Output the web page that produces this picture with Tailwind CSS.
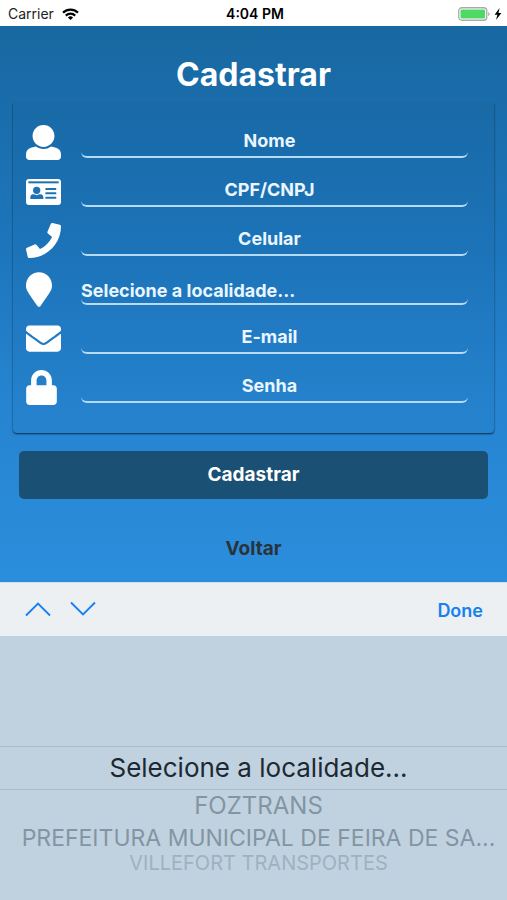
<!DOCTYPE html>
<html lang="pt-BR">
<head>
<meta charset="utf-8">
<meta name="viewport" content="width=device-width, initial-scale=1">
<title>Cadastrar</title>
<script src="https://cdn.jsdelivr.net/npm/@tailwindcss/browser@4"></script>
</head>
<body class="flex min-h-screen flex-col bg-[#c0d2e0] font-['Inter','Liberation_Sans',sans-serif]">

<header class="grid h-[26px] grid-cols-3 items-center bg-white pt-px pr-[5px] pl-2 text-[14px] text-[#222]">
  <div class="flex items-center gap-2">
    <span>Carrier</span>
    <svg class="h-3 w-[17px]" viewBox="0 0 17 12" fill="none" stroke="#000" stroke-width="2.2" aria-hidden="true">
      <path d="M1 4.6a10.8 10.8 0 0 1 15 0"/>
      <path d="M3.8 7.6a6.8 6.8 0 0 1 9.4 0"/>
      <path d="M8.5 12 5.9 9.4a3.8 3.8 0 0 1 5.2 0z" fill="#000" stroke="none"/>
    </svg>
  </div>
  <time class="text-center font-semibold text-black">4:04 PM</time>
  <div class="flex items-center justify-end gap-1">
    <svg class="h-[14px] w-8" viewBox="0 0 32 14" aria-hidden="true">
      <rect x=".75" y=".75" width="28" height="12.5" rx="3" fill="#fff" stroke="#aaa" stroke-width="1.3"/>
      <rect x="2.5" y="2.5" width="24.5" height="9" rx="1" fill="#4cd964"/>
      <path d="M30.2 5v4q1.5-.6 1.5-2t-1.5-2z" fill="#aaa"/>
    </svg>
    <svg class="h-3 w-2" viewBox="0 0 8 12" aria-hidden="true"><path d="M5.6 0 .6 6.8h2.8L2 12l5.4-7H4.5z" fill="#000"/></svg>
  </div>
</header>

<main class="flex h-[556px] flex-col bg-[linear-gradient(#1868a1,#1d76bc_40%,#2684d1_68%,#2b8edc)] px-[13px]">
  <h1 class="pt-[29px] pb-2 text-center text-[32px] leading-10 font-bold text-white">Cadastrar</h1>

  <form class="flex flex-col">
    <div class="flex h-[330px] flex-col gap-[14px] rounded-b bg-black/2 pt-[22px] pr-[26px] pl-[13px] shadow-[0_1px_2px_rgba(0,0,0,0.7)]">
      <div class="flex h-[35px] items-center gap-[19px]">
        <label for="nome" class="w-9 shrink-0">
          <svg class="size-[35px]" viewBox="0 0 512 512" fill="#fff" role="img" aria-label="Nome"><path d="M256 0c88.366 0 160 71.634 160 160s-71.634 160-160 160S96 248.366 96 160 167.634 0 256 0zm183.283 333.821l-71.313-17.828c-74.923 53.89-165.738 41.864-223.94 0l-71.313 17.828C29.981 344.505 0 382.903 0 426.955V464c0 26.51 21.49 48 48 48h416c26.51 0 48-21.49 48-48v-37.045c0-44.052-29.981-82.45-72.717-93.134z"/></svg>
        </label>
        <input id="nome" type="text" placeholder="Nome" class="h-[31px] min-w-0 flex-1 rounded-md border-b-2 border-[#b5dbf6] pr-[10px] pb-[3px] text-center text-[18px] font-bold text-white outline-none placeholder:text-[#eaf6ff]">
      </div>
      <div class="flex h-[35px] items-center gap-[19px]">
        <label for="cpf" class="w-9 shrink-0">
          <svg class="h-[26px] w-[35px]" viewBox="0 0 105 78" role="img" aria-label="CPF/CNPJ">
            <rect width="105" height="78" rx="9" fill="#fff"/>
            <g fill="#1c74b4"><rect x="7" y="7" width="91" height="6"/><circle cx="32" cy="34" r="11"/><path d="M13 60v-5q0-8 8-9h3q8 5 16 0h3q9 1 9 9v5z"/><rect x="58" y="27" width="33" height="6" rx="2"/><rect x="58" y="40" width="33" height="6" rx="2"/><rect x="58" y="53" width="33" height="6" rx="2"/></g>
          </svg>
        </label>
        <input id="cpf" type="text" placeholder="CPF/CNPJ" class="h-[31px] min-w-0 flex-1 rounded-md border-b-2 border-[#b5dbf6] pr-[10px] pb-[3px] text-center text-[18px] font-bold text-white outline-none placeholder:text-[#eaf6ff]">
      </div>
      <div class="flex h-[35px] items-center gap-[19px]">
        <label for="celular" class="w-9 shrink-0">
          <svg class="size-[35px]" viewBox="0 0 512 512" fill="#fff" role="img" aria-label="Celular"><path d="M493.4 24.6l-104-24c-11.3-2.6-22.9 3.3-27.5 13.9l-48 112c-4.2 9.8-1.4 21.3 6.9 28l60.6 49.6c-36 76.7-98.9 140.5-177.2 177.2l-49.6-60.6c-6.8-8.3-18.2-11.1-28-6.9l-112 48C3.9 366.5-2 378.1.6 389.4l24 104C27.1 504.2 36.7 512 48 512c256.1 0 464-207.5 464-464 0-11.2-7.7-20.9-18.6-23.4z"/></svg>
        </label>
        <input id="celular" type="tel" placeholder="Celular" class="h-[31px] min-w-0 flex-1 rounded-md border-b-2 border-[#b5dbf6] pr-[10px] pb-[3px] text-center text-[18px] font-bold text-white outline-none placeholder:text-[#eaf6ff]">
      </div>
      <div class="flex h-[35px] items-center gap-[19px]">
        <label for="local" class="w-9 shrink-0">
          <svg class="h-[35px] w-[26px]" viewBox="0 0 384 512" fill="#fff" role="img" aria-label="Localidade"><path d="M172.268 501.67C26.97 291.031 0 269.413 0 192 0 85.961 85.961 0 192 0s192 85.961 192 192c0 77.413-26.97 99.031-172.268 309.67-9.535 13.774-29.93 13.773-39.464 0z"/></svg>
        </label>
        <select id="local" class="h-[31px] min-w-0 flex-1 appearance-none rounded-md border-b-2 border-[#b5dbf6] pt-[3px] text-[18px] font-bold text-[#eaf6ff] outline-none">
          <option>Selecione a localidade...</option>
          <option>FOZTRANS</option>
          <option>PREFEITURA MUNICIPAL DE FEIRA DE SA...</option>
          <option>VILLEFORT TRANSPORTES</option>
        </select>
      </div>
      <div class="flex h-[35px] items-center gap-[19px]">
        <label for="email" class="w-9 shrink-0">
          <svg class="size-[35px]" viewBox="0 0 512 512" fill="#fff" role="img" aria-label="E-mail"><path d="M502.3 190.8c3.9-3.1 9.7-.2 9.7 4.7V400c0 26.5-21.5 48-48 48H48c-26.5 0-48-21.5-48-48V195.6c0-5 5.7-7.8 9.7-4.7 22.4 17.4 52.1 39.5 154.1 113.6 21.1 15.4 56.7 47.8 92.2 47.6 35.7.3 72-32.8 92.3-47.6 102-74.1 131.6-96.3 154-113.7zM256 320c23.2.4 56.6-29.2 73.4-41.4 132.7-96.3 142.8-104.7 173.4-128.7 5.8-4.5 9.2-11.5 9.2-18.9v-19c0-26.5-21.5-48-48-48H48c-26.5 0-48 21.5-48 48v19c0 7.4 3.4 14.3 9.2 18.9 30.6 23.9 40.7 32.4 173.4 128.7 16.8 12.2 50.2 41.8 73.4 41.4z"/></svg>
        </label>
        <input id="email" type="email" placeholder="E-mail" class="h-[31px] min-w-0 flex-1 rounded-md border-b-2 border-[#b5dbf6] pr-[10px] pb-[3px] text-center text-[18px] font-bold text-white outline-none placeholder:text-[#eaf6ff]">
      </div>
      <div class="flex h-[35px] items-center gap-[19px]">
        <label for="senha" class="w-9 shrink-0">
          <svg class="h-[35px] w-[31px]" viewBox="0 0 448 512" fill="#fff" role="img" aria-label="Senha"><path d="M400 224h-24v-72C376 68.2 307.8 0 224 0S72 68.2 72 152v72H48c-26.5 0-48 21.5-48 48v192c0 26.5 21.5 48 48 48h352c26.5 0 48-21.5 48-48V272c0-26.5-21.5-48-48-48zm-104 0H152v-72c0-39.7 32.3-72 72-72s72 32.3 72 72v72z"/></svg>
        </label>
        <input id="senha" type="password" placeholder="Senha" class="h-[31px] min-w-0 flex-1 rounded-md border-b-2 border-[#b5dbf6] pr-[10px] pb-[3px] text-center text-[18px] font-bold text-white outline-none placeholder:text-[#eaf6ff]">
      </div>
    </div>
    <button type="submit" class="mx-[6px] mt-[18px] h-12 rounded-[5px] bg-[#1a5073] pt-px text-[19px] font-bold text-white">Cadastrar</button>
  </form>
  <a href="#" class="mt-9 self-center text-[19px] leading-7 font-bold text-[#2a333b]">Voltar</a>
</main>

<section aria-label="Localidade" class="flex flex-1 flex-col">
  <div class="flex h-[54px] items-center justify-between border-t border-[#cfdfea] bg-[#ecf0f3] px-6 text-[#1680ef]">
    <div class="flex gap-[17px] pb-px">
      <button type="button" aria-label="Anterior"><svg class="h-4 w-7" viewBox="0 0 28 16" fill="none" stroke="currentColor" stroke-width="1.9"><path d="M2 14.5 14 2.5l12 12"/></svg></button>
      <button type="button" aria-label="Próximo"><svg class="h-4 w-7" viewBox="0 0 28 16" fill="none" stroke="currentColor" stroke-width="1.9"><path d="m2 1.5 12 12 12-12"/></svg></button>
    </div>
    <button type="button" class="pt-px text-[18px] font-semibold">Done</button>
  </div>
  <ul role="listbox" aria-label="Localidade" class="flex flex-1 flex-col pt-[110px] text-center whitespace-nowrap text-[#8395a3]">
    <li role="option" aria-selected="true" class="border-y border-[#abbdca] pl-[10px] text-[26px] leading-[42px] text-[#1d2932]">Selecione a localidade...</li>
    <li role="option" aria-selected="false" class="pl-[10px] text-[24px] leading-8">FOZTRANS</li>
    <li role="option" aria-selected="false" class="pl-[10px] text-[23px] leading-8">PREFEITURA MUNICIPAL DE FEIRA DE SA...</li>
    <li role="option" aria-selected="false" class="pl-[10px] text-[20px] leading-[18px] text-[#9fb1bf]">VILLEFORT TRANSPORTES</li>
  </ul>
</section>
</body>
</html>
